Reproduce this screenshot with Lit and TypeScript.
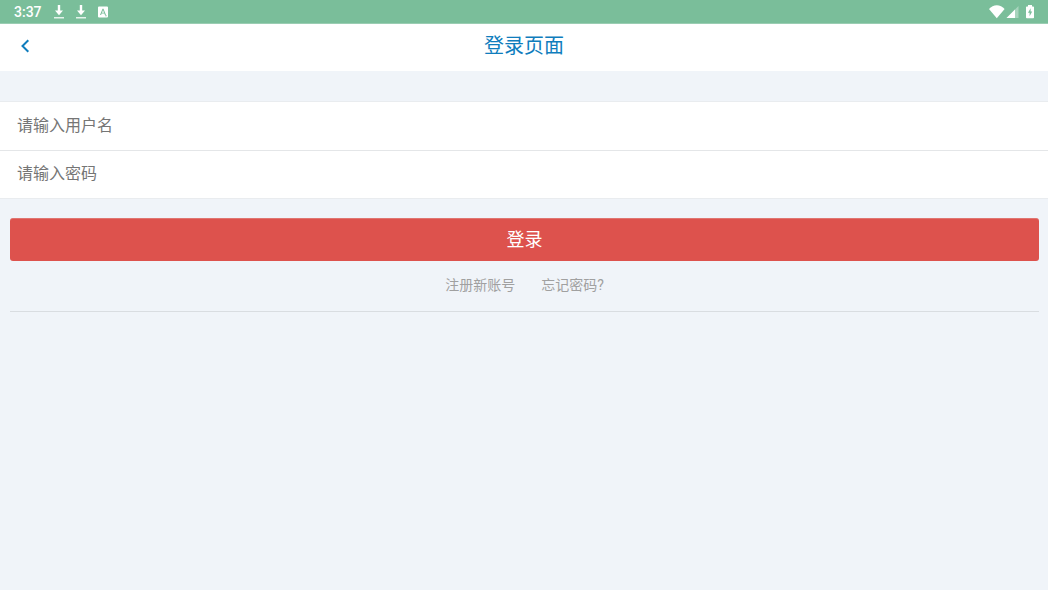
import { LitElement, html, css } from "lit";
import { customElement } from "lit/decorators.js";

const fontStack = css`Roboto, "Noto Sans CJK SC", sans-serif`;

@customElement("status-bar")
class StatusBar extends LitElement {
  static styles = css`
    :host {
      display: flex;
      align-items: center;
      justify-content: space-between;
      height: 24px;
      box-sizing: border-box;
      padding: 0 13px 0 14px;
      background: #7abe9a;
      border-bottom: 1px solid #9acdb2;
      color: #fff;
      font: 500 14px/24px ${fontStack};
    }
    .group {
      display: flex;
      align-items: center;
    }
    .notices {
      gap: 12px;
    }
    svg {
      display: block;
      fill: #fff;
    }
  `;

  private download() {
    return html`<svg width="10" height="14" viewBox="0 0 10 14" aria-hidden="true">
      <path d="M3.8 0h2.4v5.5H9L5 10.2 1 5.5h2.8z" />
      <path d="M0 12h10v1.5H0z" fill-opacity=".8" />
    </svg>`;
  }

  render() {
    return html`
      <div class="group notices">
        <span>3:37</span>
        ${this.download()} ${this.download()}
        <svg width="10" height="12" viewBox="0 0 10 12" aria-hidden="true">
          <path
            fill-rule="evenodd"
            d="M1 .5h8a1 1 0 0 1 1 1v9a1 1 0 0 1-1 1H1a1 1 0 0 1-1-1v-9a1 1 0 0 1 1-1zM4.5 2.7 2 9h1.1l.5-1.4h2.8L6.9 9H8L5.5 2.7zM5 4.1l1 2.6H4zM7.2 9.3v.9h1.4v-.9z"
          />
        </svg>
      </div>
      <div class="group">
        <svg width="46" height="16" viewBox="0 0 46 16" aria-hidden="true">
          <path d="M0 5C4-.1 11.6-.1 15.6 5L7.8 14.2z" />
          <path d="M29.5 2v12H17.5z" fill-opacity=".35" />
          <path d="M26 5.5V14h-8.5z" />
          <path
            fill-rule="evenodd"
            d="M39 1h4v1.4h1.2q.8 0 .8.8v10.2q0 .8-.8.8h-6.4q-.8 0-.8-.8V3.2q0-.8.8-.8H39zM41.6 4.2 39 8.8h1.6v3.4L43.2 7.6h-1.6z"
          />
        </svg>
      </div>
    `;
  }
}

@customElement("app-root")
class AppRoot extends LitElement {
  static styles = css`
    :host {
      display: block;
      min-height: 100vh;
      background: #f0f4f9;
      font-family: ${fontStack};
    }
    header {
      display: grid;
      grid-template-columns: 48px 1fr 48px;
      align-items: start;
      height: 47px;
      background: #fff;
    }
    .back {
      display: flex;
      height: 44px;
      align-items: center;
      padding: 0 0 0 20px;
      border: 0;
      background: none;
      cursor: pointer;
    }
    h1 {
      margin: 0;
      color: #0f7dbd;
      font-size: 20px;
      line-height: 44px;
      font-weight: 400;
      text-align: center;
    }
    .fields {
      margin-top: 30px;
      border: solid #e9ecef;
      border-width: 1px 0;
      background: #fff;
    }
    .field {
      display: block;
      width: 100%;
      height: 48px;
      box-sizing: border-box;
      padding: 0 17px 2px;
      border: 0;
      border-radius: 0;
      outline: 0;
      background: none;
      color: #333;
      font: 16px/24px ${fontStack};
    }
    .field + .field {
      border-top: 1px solid #e4e6e8;
    }
    .field::placeholder {
      color: #757575;
      opacity: 1;
    }
    .actions {
      margin: 19px 9px 0 10px;
      border-bottom: 1px solid #d9dde1;
    }
    .submit {
      display: block;
      width: 100%;
      height: 43px;
      padding: 0;
      border: 0;
      border-top: 1px solid #e07571;
      border-radius: 3px;
      background: #dd524d;
      color: #fff;
      font: 18px/24px ${fontStack};
      cursor: pointer;
    }
    .links {
      display: flex;
      justify-content: center;
      gap: 26px;
      padding: 14px 0 16px;
      font-size: 14px;
      line-height: 20px;
    }
    .links a {
      color: #a0a0a0;
      text-decoration: none;
    }
  `;

  render() {
    return html`
      <status-bar></status-bar>
      <header>
        <button class="back" type="button" aria-label="返回">
          <svg width="10" height="14" viewBox="0 0 10 14" aria-hidden="true">
            <path d="M8.3 1.2 2.5 7l5.8 5.8" fill="none" stroke="#0f7dbd" stroke-width="2" />
          </svg>
        </button>
        <h1>登录页面</h1>
      </header>
      <form @submit=${(e: Event) => e.preventDefault()}>
        <div class="fields">
          <input class="field" type="text" aria-label="用户名" placeholder="请输入用户名" />
          <input class="field" type="password" aria-label="密码" placeholder="请输入密码" />
        </div>
        <div class="actions">
          <button class="submit" type="submit">登录</button>
          <nav class="links">
            <a href="#register">注册新账号</a>
            <a href="#forgot">忘记密码?</a>
          </nav>
        </div>
      </form>
    `;
  }
}
